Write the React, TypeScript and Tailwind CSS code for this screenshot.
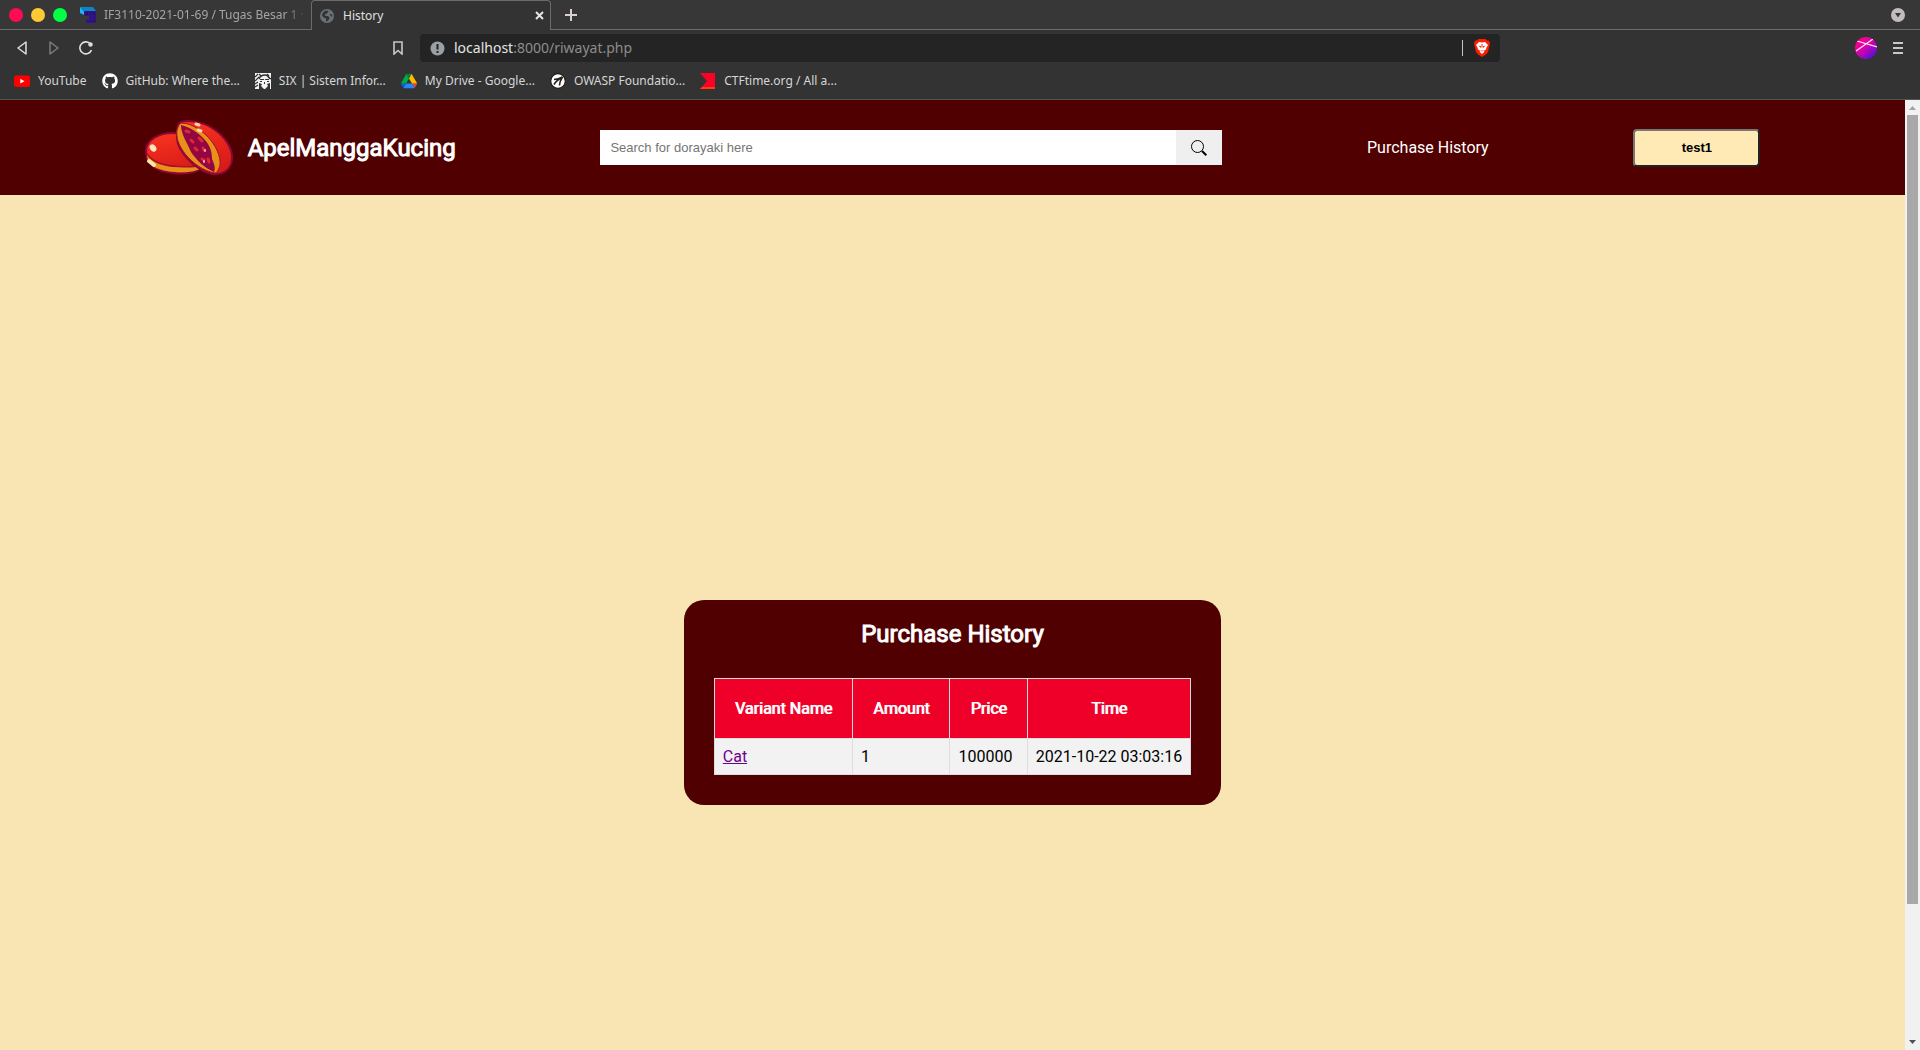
import React from "react";
import { FaGithub } from "react-icons/fa";

const ui = "font-['Noto_Sans','Open_Sans',sans-serif]";

function TabFavicon() {
  return (
    <svg width="16" height="16" viewBox="0 0 16 16" aria-hidden="true">
      <path d="M0 0L4 4V8L0 6Z" fill="#19b5f1" />
      <path d="M0 0H13L16 4H4Z" fill="#0c84c6" />
      <path d="M4 4H16V16H6V12H9V9H4Z" fill="#33128c" />
      <path d="M6 5H8V8H6ZM10 5H11V8H10ZM13 5H15V8H13ZM10 10H11V11H10ZM13 10H15V11H13ZM10 13H11V15H10ZM13 13H15V15H13Z" fill="#211a48" />
    </svg>
  );
}

function GlobeIcon() {
  return (
    <svg width="14" height="14" viewBox="0 0 14 14" aria-hidden="true">
      <circle cx="7" cy="7" r="7" fill="#6b7075" />
      <path d="M2 6.500C2 4 4 2 6 1.500L8.500 2 7 4.500 5.500 5 5 7H8L9.500 8.500 9 10.500 7 12.500 6 12V9.500L3.500 8.500Z" fill="#333" />
      <path d="M9.500 5L12 5.500 12.500 7.500 11 7.500Z" fill="#333" />
    </svg>
  );
}

function YouTubeIcon() {
  return (
    <svg width="16" height="16" viewBox="0 0 16 16" aria-hidden="true">
      <rect y="2.500" width="16" height="11.500" rx="2.500" fill="#f00" />
      <path d="M6.300 5.800L10.500 8.200 6.300 10.600Z" fill="#fff" />
    </svg>
  );
}

function SixIcon() {
  return (
    <svg width="16" height="16" viewBox="0 0 16 16" aria-hidden="true">
      <rect width="16" height="16" fill="#f2f2f2" />
      <path d="M0 4L3 1M0 8L4 4M4 1L6 3M12 1L14 3M0 11L3 9M0 14L3 12M13 4L16 6" stroke="#333" strokeWidth="1.200" fill="none" />
      <path d="M4 6C5 3 8 2 10 2S14 4 15 6" stroke="#333" strokeWidth="1.400" fill="none" />
      <path d="M5 6H9V7H5ZM10 6H14V7H10ZM5 8H7V9H5ZM12 8H14V9H12ZM4 10L7 11 6 13 9 16H4ZM15 10L12 11 13 13 10 16H15Z" fill="#333" />
      <path d="M9 9H10V11H9Z" fill="#333" />
    </svg>
  );
}

function DriveIcon() {
  return (
    <svg width="16" height="16" viewBox="0 0 87.300 78" aria-hidden="true">
      <path d="M6.600 66.850l3.850 6.650c.8 1.400 1.950 2.500 3.300 3.300l13.750-23.800H0c0 1.550.4 3.100 1.200 4.500z" fill="#0066da" />
      <path d="M43.650 25L29.900 1.200c-1.350.8-2.500 1.900-3.300 3.300L1.200 48.500C.4 49.900 0 51.450 0 53h27.500z" fill="#00ac47" />
      <path d="M73.550 76.800c1.350-.8 2.500-1.900 3.300-3.300l1.600-2.750 7.650-13.250c.8-1.400 1.200-2.950 1.200-4.500H59.800l5.850 11.500z" fill="#ea4335" />
      <path d="M43.650 25L57.400 1.200C56.050.4 54.500 0 52.900 0H34.400c-1.600 0-3.150.45-4.500 1.200z" fill="#00832d" />
      <path d="M59.800 53H27.500L13.750 76.800c1.350.8 2.900 1.200 4.500 1.200h50.800c1.600 0 3.150-.45 4.500-1.200z" fill="#2684fc" />
      <path d="M73.400 26.500l-12.700-22c-.8-1.400-1.950-2.500-3.300-3.300L43.650 25 59.800 53h27.450c0-1.550-.4-3.100-1.200-4.500z" fill="#ffba00" />
    </svg>
  );
}

function OwaspIcon() {
  return (
    <svg width="16" height="16" viewBox="0 0 16 16" aria-hidden="true">
      <circle cx="8" cy="8" r="7.300" fill="#fff" stroke="#1c1c1c" strokeWidth="1.200" />
      <path d="M4 6.500C7 6.500 10 5.500 12.500 4C10.500 7 9.500 9 9.500 12.500M12.500 4C9 6 6 8 4 11.500" fill="none" stroke="#222" strokeWidth="1.600" />
    </svg>
  );
}

function CtfIcon() {
  return (
    <svg width="16" height="16" viewBox="0 0 16 16" aria-hidden="true">
      <path d="M0 0H15V16H0L7 8Z" fill="#ff0025" />
      <path d="M2 14H15V16H0Z" fill="#ff3c14" />
    </svg>
  );
}

function BraveIcon() {
  return (
    <svg width="16" height="18" viewBox="0 0 16 18" aria-hidden="true">
      <path d="M4.500 0H11.500L13 1.500 15 1.700 16 4.500 15.500 6.500 14 13 12.500 15 8 18 3.500 15 2 13 .5 6.500 0 4.500 1 1.700 3 1.500Z" fill="#fb1e00" />
      <path d="M5 3L8 3.500 11 3 14 6 12.500 8.500 12 10.500 9.500 12 10.500 12.800 8 15 5.500 12.800 6.500 12 4 10.500 3.500 8.500 2 6Z" fill="#fff" />
      <path d="M4.500 6.500L6.800 7 7 9.500 6 8ZM11.500 6.500L9.200 7 9 9.500 10 8ZM6 11L8 11.800 10 11 8 12.600Z" fill="#fb1e00" />
      <path d="M8 5V8.500" stroke="#fb1e00" strokeWidth="1" />
    </svg>
  );
}

function AvatarIcon() {
  return (
    <svg width="22" height="22" viewBox="0 0 22 22" aria-hidden="true">
      <defs>
        <linearGradient id="avatar" x1="0.100" y1="0.100" x2="0.800" y2="0.900">
          <stop offset="0" stopColor="#ff0080" />
          <stop offset="0.450" stopColor="#e000a8" />
          <stop offset="1" stopColor="#5b0fd8" />
        </linearGradient>
        <clipPath id="disc"><circle cx="11" cy="11" r="11" /></clipPath>
      </defs>
      <g clipPath="url(#disc)">
        <rect width="22" height="22" fill="url(#avatar)" />
        <path d="M1 14L18 2M2 4L22 10" stroke="#ffe3f6" strokeWidth="1.300" />
      </g>
    </svg>
  );
}

function DorayakiLogo() {
  return (
    <svg width="90" height="58" viewBox="0 0 90 58" aria-hidden="true">
      <defs>
        <linearGradient id="bun" x1="0" y1="0" x2="0.300" y2="1">
          <stop offset="0" stopColor="#fb3420" />
          <stop offset="1" stopColor="#d81c18" />
        </linearGradient>
      </defs>
      <path d="M1 34C0 22 12 14 28 14C46 14 60 28 60 42C60 52 44 56 28 54C12 52 2 47 1 34Z" fill="url(#bun)" stroke="#8c0638" strokeWidth="2" />
      <path d="M2 35C8 44 20 48 34 48C44 48 52 47 58 45C58 52 44 54 30 53C14 52 2 47 2 35Z" fill="#e99018" />
      <path d="M2 35C8 44 20 47 34 47.500C44 48 52 48 56 46" fill="none" stroke="#a8102c" strokeWidth="1.500" />
      <path d="M36 3C42 1 56 2 67 9C80 17 88 30 87 40C86 51 78 56 67 55C50 51 32 32 32 18C32 11 32 5 36 3Z" fill="url(#bun)" stroke="#8c0638" strokeWidth="2" />
      <path d="M36 4C44 4 54 9 62 17C71 26 76 38 75 46C74 50 72 54 70 54C58 52 48 44 41 36C33 26 31 18 32 11C33 8 34 5 36 4Z" fill="#e99018" stroke="#a8102c" strokeWidth="1" />
      <path d="M36 6C45 8 54 14 60 21C66 28 67 34 67 40C69 45 71 49 69 53C60 49 52 42 46 33C43 25 36 16 36 6Z" fill="#920642" />
      <path d="M41 12L44 13M46 21L48 23M54 19L57 22M50 29L52 31M58 29L59 31M57 40L59 41M63 40L64 43" stroke="#e02830" strokeWidth="3" strokeLinecap="round" />
      <path d="M60 31V32M59 42V43" stroke="#ff9fc0" strokeWidth="2" strokeLinecap="round" />
      <ellipse cx="8" cy="29" rx="3" ry="4" fill="#ffe4bd" transform="rotate(-35 8 29)" />
      <path d="M4 42L9 46" stroke="#ffe9a6" strokeWidth="4" strokeLinecap="round" />
      <path d="M51 5L54 6M53 11L56 12" stroke="#ffd4a8" strokeWidth="3" strokeLinecap="round" />
    </svg>
  );
}

const bookmarks = [
  { label: "YouTube", icon: <YouTubeIcon /> },
  { label: "GitHub: Where the...", icon: <FaGithub size={16} color="#fff" /> },
  { label: "SIX | Sistem Infor...", icon: <SixIcon /> },
  { label: "My Drive - Google...", icon: <DriveIcon /> },
  { label: "OWASP Foundatio...", icon: <OwaspIcon /> },
  { label: "CTFtime.org / All a...", icon: <CtfIcon /> },
];

function TabStrip() {
  return (
    <div className="flex h-[30px] text-xs">
      <div className="flex min-w-0 items-center border-b border-[#6b6b6b] bg-[#373737] pl-[9px]">
        <div className="flex gap-2">
          <button aria-label="Close window" className="size-[14px] rounded-full bg-[#ff0a54]" />
          <button aria-label="Minimize window" className="size-[14px] rounded-full bg-[#ffc933]" />
          <button aria-label="Maximize window" className="size-[14px] rounded-full bg-[#00ff45]" />
        </div>
        <button className="ml-[13px] flex w-[231px] items-center gap-2 text-left text-[#a5a5a5]">
          <TabFavicon />
          <span className="w-[200px] overflow-hidden whitespace-nowrap [mask-image:linear-gradient(to_right,black_180px,transparent_204px)]">
            IF3110-2021-01-69 / Tugas Besar 1 ·
          </span>
        </button>
      </div>
      <div className="flex w-[240px] items-center rounded-t border-x border-t border-[#6b6b6b] bg-[#333] pr-[5px] pl-2">
        <GlobeIcon />
        <span className="ml-[9px] flex-1 text-[#e0e0e0]">History</span>
        <button aria-label="Close tab" className="flex size-3 items-center justify-center">
          <svg width="9" height="9" viewBox="0 0 9 9" stroke="#e6e6e6" strokeWidth="2"><path d="M1 1L8 8M8 1L1 8" /></svg>
        </button>
      </div>
      <div className="flex flex-1 items-center justify-between border-b border-[#6b6b6b] bg-[#373737] pr-[15px] pl-[14px]">
        <button aria-label="New tab">
          <svg width="12" height="12" viewBox="0 0 12 12" stroke="#d8d0d0" strokeWidth="2"><path d="M6 0V12M0 6H12" /></svg>
        </button>
        <button aria-label="Search tabs">
          <svg width="14" height="14" viewBox="0 0 14 14"><circle cx="7" cy="7" r="7" fill="#c4bcbc" /><path d="M4 5H10L7 9.500Z" fill="#373737" /></svg>
        </button>
      </div>
    </div>
  );
}

function Toolbar() {
  return (
    <div className="flex h-9 items-center px-[17px]">
      <div className="flex flex-1 items-center">
        <button aria-label="Back">
          <svg width="10" height="14" viewBox="0 0 10 14" fill="none" stroke="#dedede" strokeWidth="1.500" strokeLinejoin="round"><path d="M9 1V13L1 7Z" /></svg>
        </button>
        <button aria-label="Forward" className="ml-[22px]">
          <svg width="10" height="14" viewBox="0 0 10 14" fill="none" stroke="#7d7d7d" strokeWidth="1.500" strokeLinejoin="round"><path d="M1 1V13L9 7Z" /></svg>
        </button>
        <button aria-label="Reload" className="ml-5">
          <svg width="14" height="14" viewBox="0 0 14 14"><path d="M11 2.500A6 6 0 1 0 12.500 9" fill="none" stroke="#dedede" strokeWidth="1.600" /><circle cx="11.500" cy="3.500" r="2.200" fill="#dedede" /></svg>
        </button>
        <button aria-label="Bookmark this page" className="mr-[17px] ml-auto">
          <svg width="10" height="14" viewBox="0 0 10 14" fill="none" stroke="#c8c8c8" strokeWidth="1.600"><path d="M1 1H9V13L5 9.500 1 13Z" /></svg>
        </button>
      </div>
      <div className="flex h-7 w-[1080px] items-center rounded bg-[#242424] px-[10px]">
        <svg width="15" height="15" viewBox="0 0 15 15" aria-hidden="true"><circle cx="7.500" cy="7.500" r="7" fill="#9aa0a6" /><path d="M7.500 3V8.500M7.500 10V12" stroke="#242424" strokeWidth="2" /></svg>
        <a href="#address" className="ml-[9px] flex-1 text-sm text-[#8c8c8c]">
          <span className="text-[#e4e4e4]">localhost</span>:8000/riwayat.php
        </a>
        <div className="mr-[11px] h-4 w-px bg-[#c4c4c4]" />
        <button aria-label="Brave Shields"><BraveIcon /></button>
      </div>
      <div className="flex flex-1 items-center justify-end gap-4">
        <button aria-label="Profile"><AvatarIcon /></button>
        <button aria-label="Menu">
          <svg width="10" height="12" viewBox="0 0 10 12" stroke="#c8c8c8" strokeWidth="2"><path d="M0 1H10M0 6H10M0 11H10" /></svg>
        </button>
      </div>
    </div>
  );
}

function Scrollbar() {
  return (
    <div className="flex w-[15px] shrink-0 flex-col items-center bg-[#f1f1f1]" aria-hidden="true">
      <svg width="15" height="15" viewBox="0 0 15 15" className="shrink-0"><path d="M4 10H11L7.500 6Z" fill="#a3a3a3" /></svg>
      <div className="flex w-full flex-1 flex-col px-[2px]">
        <div className="flex-[6] bg-[#a8a8a8]" />
        <div className="flex-1" />
      </div>
      <svg width="15" height="15" viewBox="0 0 15 15" className="shrink-0"><path d="M4 5H11L7.500 9Z" fill="#505050" /></svg>
    </div>
  );
}

export default function App() {
  return (
    <div className="flex h-screen flex-col overflow-hidden">
      <div className={`${ui} shrink-0 border-b border-[#555] bg-[#333]`}>
        <TabStrip />
        <Toolbar />
        <nav className="flex h-[33px] items-center gap-[15px] pb-[3px] pl-[14px] text-xs text-[#d6d6d6]">
          {bookmarks.map((b) => (
            <a key={b.label} href="#bookmark" className="flex items-center gap-2 whitespace-nowrap">
              {b.icon}
              {b.label}
            </a>
          ))}
        </nav>
      </div>
      <div className="flex min-h-0 flex-1">
        <div className="h-full flex-1 overflow-hidden bg-[#f9e4b3] font-['Roboto',sans-serif] text-base leading-[19px]">
          <header className="flex h-[95px] items-center justify-evenly bg-[#500000] text-white">
            <a href="#home" className="flex items-center gap-[13px]">
              <DorayakiLogo />
              <span className="text-2xl [-webkit-text-stroke:1px_currentColor]">ApelManggaKucing</span>
            </a>
            <form className="flex h-[35px] w-[622px]" onSubmit={(e) => e.preventDefault()}>
              <input
                type="text"
                aria-label="Search for dorayaki"
                placeholder="Search for dorayaki here"
                className="min-w-0 flex-1 bg-white px-[10px] font-['Liberation_Sans',sans-serif] text-[13px] text-black placeholder:text-[#757575]"
              />
              <button aria-label="Search" className="flex w-[46px] items-center justify-center bg-[#efefef]">
                <svg width="16" height="16" viewBox="0 0 16 16" fill="none" stroke="#000"><circle cx="6.500" cy="6.500" r="6" strokeWidth="1" /><path d="M11 11L15.300 15.300" strokeWidth="2" /></svg>
              </button>
            </form>
            <a href="#history">Purchase History</a>
            <button className="h-[38px] w-[127px] rounded border-2 border-t-[#767676] border-r-[#212121] border-b-[#212121] border-l-[#767676] bg-[#ffe9b5] font-['Liberation_Sans',sans-serif] text-[13px] font-bold text-black">
              test1
            </button>
          </header>
          <main className="flex h-[calc(100%+65px)] items-center justify-center">
            <section className="rounded-[20px] bg-[#500000] px-[30px] pt-5 pb-[30px]">
              <h1 className="mb-[30px] text-center text-2xl leading-7 text-white [-webkit-text-stroke:1px_currentColor]">Purchase History</h1>
              <table className="border-collapse">
                <thead>
                  <tr className="bg-[#ee0028] text-white">
                    {["Variant Name", "Amount", "Price", "Time"].map((h) => (
                      <th key={h} scope="col" className="border border-[#ddd] p-5 font-normal [text-shadow:1px_0_0_currentColor]">{h}</th>
                    ))}
                  </tr>
                </thead>
                <tbody>
                  <tr className="bg-[#f2f2f2] text-black">
                    <td className="border border-[#ddd] p-2"><a href="#cat" className="text-[#70008c] underline">Cat</a></td>
                    <td className="border border-[#ddd] p-2">1</td>
                    <td className="border border-[#ddd] p-2">100000</td>
                    <td className="border border-[#ddd] p-2">2021-10-22 03:03:16</td>
                  </tr>
                </tbody>
              </table>
            </section>
          </main>
        </div>
        <Scrollbar />
      </div>
    </div>
  );
}
